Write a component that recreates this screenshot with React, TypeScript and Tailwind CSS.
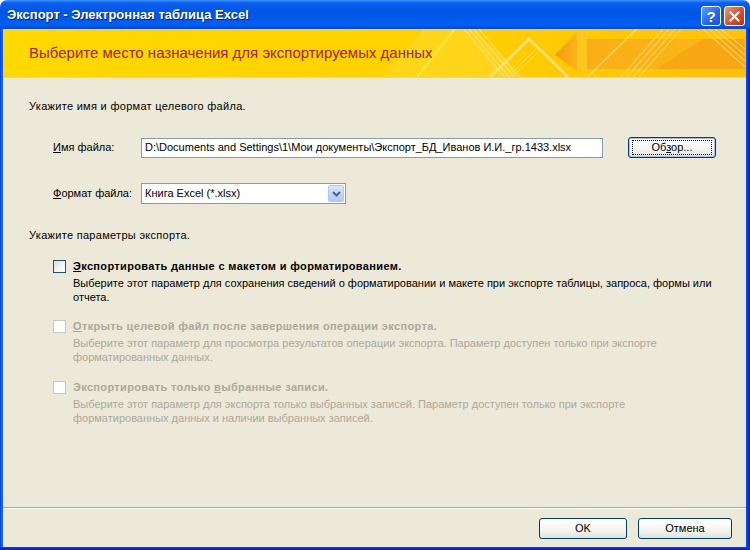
import React from 'react';

// Окно экспорта в стиле Windows XP (Luna)

const FONT = "font-['Liberation_Sans',Arial,sans-serif]";

function TitleBar() {
  return (
    <div className="h-[29px] flex items-start rounded-t-[7px] bg-[linear-gradient(180deg,#3D95FF_0%,#0A5EEE_10%,#0055E5_45%,#0060F4_85%,#0048D4_100%)] pl-[7px] pr-[5px]">
      <div className="flex-1 pt-[7px] text-[13px] leading-[15px] font-bold text-white [text-shadow:1px_1px_#0A1883]">
        Экспорт - Электронная таблица Excel
      </div>
      <div className="flex gap-[3px] pt-[6px]">
        <div className="w-[20px] h-[20px] rounded-[3px] border border-white bg-[linear-gradient(135deg,#5EA0FF_0%,#2668F2_55%,#1A4FD6_100%)] flex items-center justify-center text-white font-bold text-[15px] leading-none">
          ?
        </div>
        <div className="w-[21px] h-[20px] rounded-[3px] border border-white bg-[linear-gradient(135deg,#EE9A7E_0%,#D9582F_50%,#B8300F_100%)] flex items-center justify-center">
          <svg width="11" height="11" viewBox="0 0 11 11">
            <path d="M1.5 1.5 L9.5 9.5 M9.5 1.5 L1.5 9.5" stroke="#fff" strokeWidth="2.2" strokeLinecap="square" />
          </svg>
        </div>
      </div>
    </div>
  );
}

function BannerArt() {
  return (
    <svg className="absolute inset-0" width="743" height="48" viewBox="0 0 743 48">
      <defs>
        <linearGradient id="bg" x1="0" y1="0" x2="1" y2="0">
          <stop offset="0" stopColor="#FFD900" />
          <stop offset="0.55" stopColor="#FFD200" />
          <stop offset="1" stopColor="#FFC10A" />
        </linearGradient>
        <linearGradient id="head" x1="0" y1="0" x2="1" y2="0">
          <stop offset="0" stopColor="#F6961A" />
          <stop offset="1" stopColor="#FBB616" />
        </linearGradient>
        <linearGradient id="shaft" x1="0" y1="0" x2="1" y2="0">
          <stop offset="0" stopColor="#F9AE18" />
          <stop offset="1" stopColor="#FBB817" />
        </linearGradient>
      </defs>
      <rect width="743" height="48" fill="url(#bg)" />
      <polygon points="380,48 420,0 470,0 520,48" fill="#FFE04A" opacity="0.35" />
      <line x1="414" y1="48" x2="452" y2="0" stroke="#FFEB3B" strokeWidth="2" />
      {[0, 1, 2, 3].map(i => (
        <line key={i} x1={461 + i * 5} y1="0" x2={501 + i * 5} y2="48" stroke="#FFE680" strokeWidth="1.3" opacity="0.7" />
      ))}
      <polyline points="487,48 526,10 565,48" fill="none" stroke="#FFE27A" strokeWidth="2.5" />
      {[0, 1, 2].map(i => (
        <line key={i} x1={500 + i * 5} y1="48" x2={528 + i * 5} y2="20" stroke="#FFE27A" strokeWidth="1" opacity="0.6" />
      ))}
      <polygon points="552,26 574,3 574,42" fill="url(#head)" />
      <rect x="574" y="3" width="10" height="39" fill="#FFC71E" />
      <rect x="584" y="10" width="158" height="30" fill="url(#shaft)" />
      <line x1="584" y1="48" x2="634" y2="0" stroke="#FFDD6A" strokeWidth="1.6" opacity="0.8" />
      {[0, 1, 2, 3].map(i => (
        <line key={i} x1={618 + i * 6} y1="48" x2={660 + i * 6} y2="0" stroke="#FFDC70" strokeWidth="1.2" opacity="0.7" />
      ))}
      <polygon points="654,40 700,10 742,10 742,40" fill="#F8A714" />
      {[0, 1, 2, 3].map(i => (
        <line key={i} x1={700 + i * 6} y1="0" x2={742} y2={38 - i * 6} stroke="#FFDC70" strokeWidth="1.2" opacity="0.7" />
      ))}
    </svg>
  );
}

function XpButton({ children, focused, className }: { children: React.ReactNode; focused?: boolean; className?: string }) {
  return (
    <div
      className={`h-[21px] rounded-[3px] border border-[#003C74] bg-[linear-gradient(180deg,#FFFFFF_0%,#F4F4F0_60%,#E3E2DA_100%)] flex items-center justify-center ${
        focused ? 'shadow-[inset_0_0_0_1px_#A5C4F0]' : ''
      } ${className ?? ''}`}
    >
      <div className={`flex items-center justify-center w-[calc(100%-6px)] h-[15px] ${focused ? 'border border-dotted border-black' : ''}`}>
        {children}
      </div>
    </div>
  );
}

function CheckBox({ disabled }: { disabled?: boolean }) {
  return (
    <div
      className={`w-[13px] h-[13px] shrink-0 border ${
        disabled ? 'border-[#CAC8BB] bg-white' : 'border-[#1C5180] bg-[linear-gradient(135deg,#DCDCD7_0%,#F4F4F2_60%,#FFFFFF_100%)]'
      }`}
    />
  );
}

function ExportOption({
  label,
  lines,
  disabled,
  className
}: {
  label: React.ReactNode;
  lines: string[];
  disabled?: boolean;
  className?: string;
}) {
  const color = disabled ? 'text-[#ACA899]' : 'text-black';
  return (
    <div className={`pl-[24px] ${className ?? ''}`}>
      <div className="flex items-center gap-[7px] h-[14px]">
        <CheckBox disabled={disabled} />
        <div className={`font-bold leading-[14px] tracking-[0.35px] ${color}`}>{label}</div>
      </div>
      <div className={`pl-[20px] mt-[4px] leading-[13.5px] ${color}`}>
        {lines.map(l => (
          <div key={l}>{l}</div>
        ))}
      </div>
    </div>
  );
}

export default function App() {
  return (
    <div className={`w-[750px] h-[550px] flex flex-col text-[11px] ${FONT}`}>
      <TitleBar />
      <div className="flex flex-1 min-h-0">
        <div className="w-[3px] bg-[linear-gradient(90deg,#0032C8_0%,#166AF0_50%,#0A5AE6_100%)]" />
        <div className="flex-1 flex flex-col bg-[#ECE9D8] min-w-0">
          <div className="relative h-[49px] border-b border-[#C6D4EC] overflow-hidden">
            <BannerArt />
            <div className="relative pl-[26px] pt-[15px] text-[15px] leading-[18px] text-[#A5240C]">
              Выберите место назначения для экспортируемых данных
            </div>
          </div>

          <div className="flex-1 flex flex-col pl-[26px]">
            <div className="mt-[21px] leading-[14px] tracking-[0.3px]">Укажите имя и формат целевого файла.</div>

            <div className="mt-[24px] flex items-center h-[21px] pl-[24px]">
              <div className="w-[88px]">
                <span className="underline">И</span>мя файла:
              </div>
              <div className="w-[462px] h-[20px] border border-[#7F9DB9] bg-white flex items-center pl-[3px] whitespace-nowrap overflow-hidden">
                D:\Documents and Settings\1\Мои документы\Экспорт_БД_Иванов И.И._гр.1433.xlsx
              </div>
              <XpButton focused className="ml-[25px] w-[88px]">
                <span>
                  Об<span className="underline">з</span>ор...
                </span>
              </XpButton>
            </div>

            <div className="mt-[25px] flex items-center h-[21px] pl-[24px]">
              <div className="w-[88px]">
                <span className="underline">Ф</span>ормат файла:
              </div>
              <div className="w-[205px] h-[21px] border border-[#7F9DB9] bg-white flex items-center pl-[3px] pr-[1px]">
                <div className="flex-1">Книга Excel (*.xlsx)</div>
                <div className="w-[16px] h-[17px] rounded-[2px] border border-[#B4C8F4] bg-[linear-gradient(180deg,#D8E4FC_0%,#C1D3FB_60%,#B0C6F6_100%)] flex items-center justify-center">
                  <svg width="9" height="6" viewBox="0 0 9 6">
                    <polyline points="1,1 4.5,4.5 8,1" fill="none" stroke="#4D6185" strokeWidth="2" />
                  </svg>
                </div>
              </div>
            </div>

            <div className="mt-[24px] leading-[14px] tracking-[0.3px]">Укажите параметры экспорта.</div>

            <ExportOption
              className="mt-[17px]"
              label={
                <>
                  <span className="underline">Э</span>кспортировать данные с макетом и форматированием.
                </>
              }
              lines={[
                'Выберите этот параметр для сохранения сведений о форматировании и макете при экспорте таблицы, запроса, формы или',
                'отчета.'
              ]}
            />
            <ExportOption
              className="mt-[15px]"
              disabled
              label={
                <>
                  <span className="underline">О</span>ткрыть целевой файл после завершения операции экспорта.
                </>
              }
              lines={[
                'Выберите этот параметр для просмотра результатов операции экспорта. Параметр доступен только при экспорте',
                'форматированных данных.'
              ]}
            />
            <ExportOption
              className="mt-[16px]"
              disabled
              label={
                <>
                  Экспортировать только <span className="underline">в</span>ыбранные записи.
                </>
              }
              lines={[
                'Выберите этот параметр для экспорта только выбранных записей. Параметр доступен только при экспорте',
                'форматированных данных и наличии выбранных записей.'
              ]}
            />
          </div>

          <div className="h-[40px] border-t border-[#ACA899] flex flex-col">
            <div className="h-px bg-white" />
            <div className="flex justify-end gap-[11px] pr-[14px] pt-[9px]">
              <XpButton className="w-[88px]">OK</XpButton>
              <XpButton className="w-[94px]">Отмена</XpButton>
            </div>
          </div>
        </div>
        <div className="w-[4px] bg-[linear-gradient(90deg,#0A55E4_0%,#0831D9_60%,#001EA0_100%)]" />
      </div>
      <div className="h-[3px] bg-[linear-gradient(180deg,#0A45DC_0%,#0019CF_100%)]" />
    </div>
  );
}
